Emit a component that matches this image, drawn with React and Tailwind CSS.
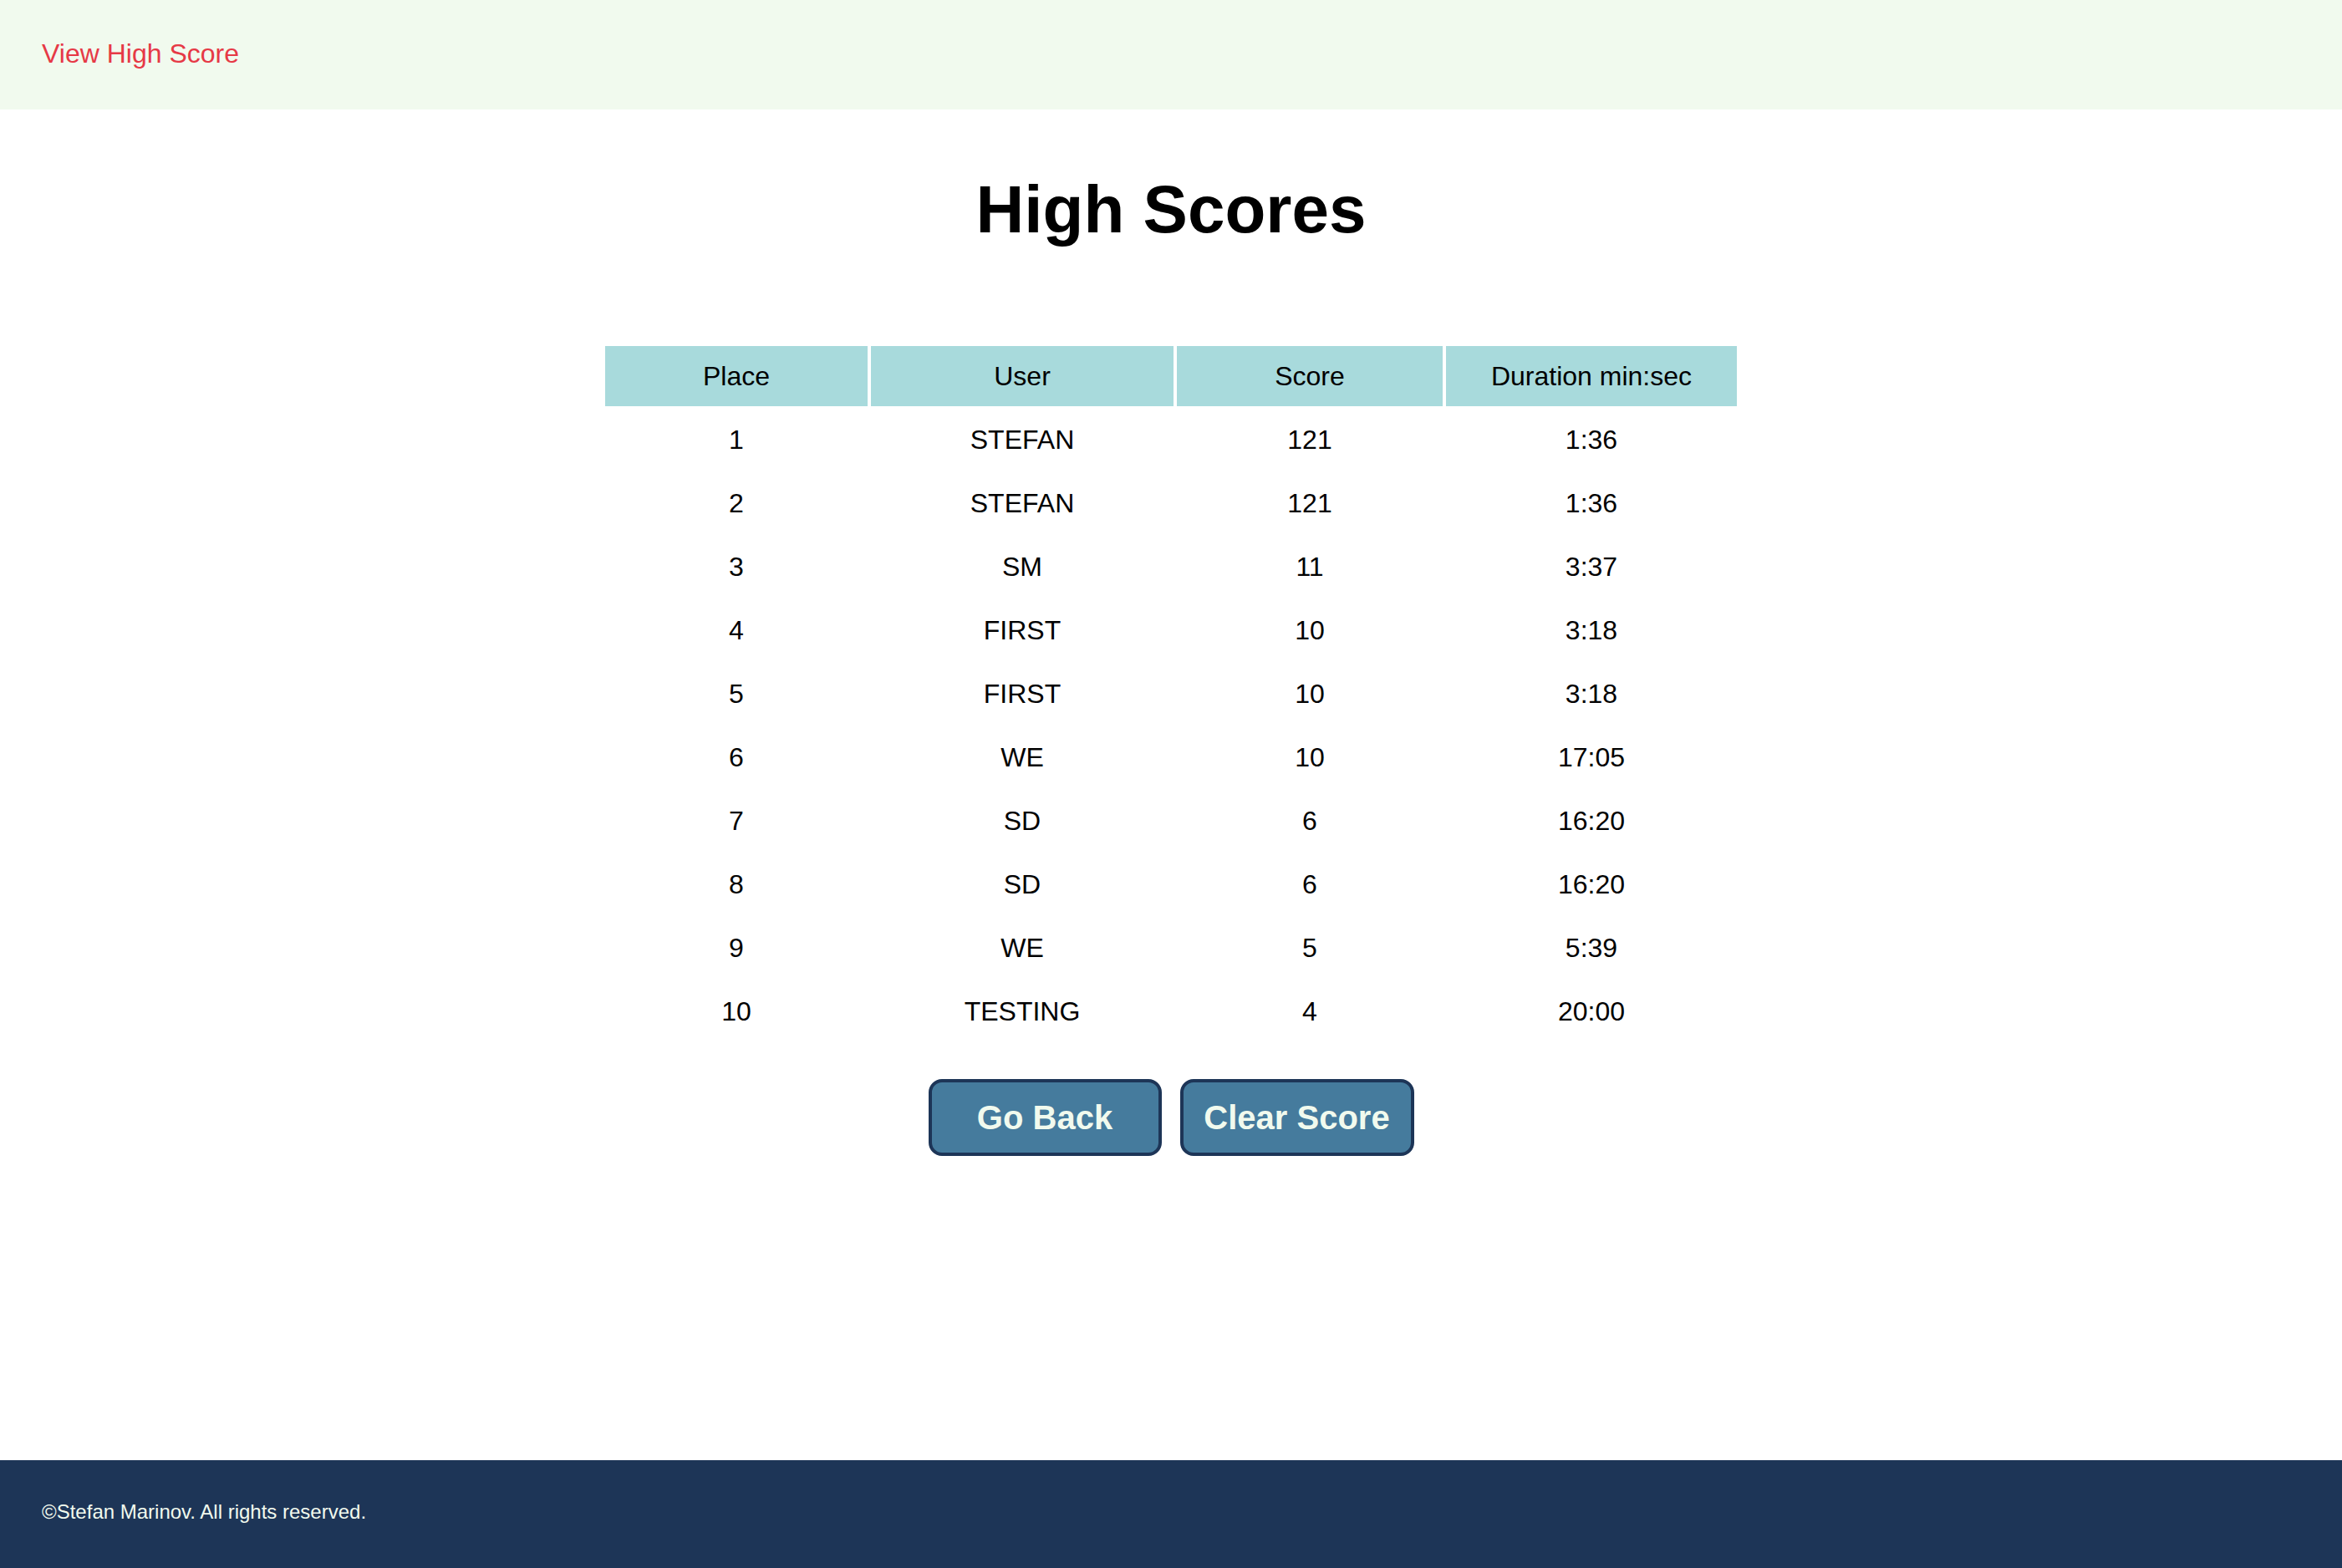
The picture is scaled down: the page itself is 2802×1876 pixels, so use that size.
const scores = [
  { place: 1, user: "STEFAN", score: 121, duration: "1:36" },
  { place: 2, user: "STEFAN", score: 121, duration: "1:36" },
  { place: 3, user: "SM", score: 11, duration: "3:37" },
  { place: 4, user: "FIRST", score: 10, duration: "3:18" },
  { place: 5, user: "FIRST", score: 10, duration: "3:18" },
  { place: 6, user: "WE", score: 10, duration: "17:05" },
  { place: 7, user: "SD", score: 6, duration: "16:20" },
  { place: 8, user: "SD", score: 6, duration: "16:20" },
  { place: 9, user: "WE", score: 5, duration: "5:39" },
  { place: 10, user: "TESTING", score: 4, duration: "20:00" },
];

const HighScores = () => {
  return (
    <div className="min-h-screen flex flex-col bg-white text-black font-['Liberation_Sans',Arial,sans-serif]">
      <header className="h-[131px] bg-[#f1faee] flex items-center px-[50px] pb-[4px]">
        <a href="#" className="text-[32px] text-[#e63946]">
          View High Score
        </a>
      </header>

      <main className="flex-1 flex flex-col items-center">
        <h1 className="mt-[74px] text-[80px] leading-[92px] font-bold">
          High Scores
        </h1>

        <table className="mt-[113px] border-separate border-spacing-[4px] text-[32px] text-center">
          <thead>
            <tr className="bg-[#a8dadc]">
              <th className="w-[314px] h-[72px] font-normal">Place</th>
              <th className="w-[362px] h-[72px] font-normal">User</th>
              <th className="w-[318px] h-[72px] font-normal">Score</th>
              <th className="w-[348px] h-[72px] font-normal">Duration min:sec</th>
            </tr>
          </thead>
          <tbody>
            {scores.map((row) => (
              <tr key={row.place}>
                <td className="h-[72px]">{row.place}</td>
                <td className="h-[72px]">{row.user}</td>
                <td className="h-[72px]">{row.score}</td>
                <td className="h-[72px]">{row.duration}</td>
              </tr>
            ))}
          </tbody>
        </table>

        <div className="mt-[41px] flex gap-[22px]">
          <button className="w-[279px] h-[92px] bg-[#457b9d] border-[4px] border-[#1d3557] rounded-[16px] text-[40px] font-bold text-[#f1faee]">
            Go Back
          </button>
          <button className="w-[280px] h-[92px] bg-[#457b9d] border-[4px] border-[#1d3557] rounded-[16px] text-[40px] font-bold text-[#f1faee]">
            Clear Score
          </button>
        </div>
      </main>

      <footer className="h-[129px] bg-[#1d3557] flex items-center px-[50px] pb-[6px]">
        <p className="text-[24px] text-[#f1faee]">
          ©Stefan Marinov. All rights reserved.
        </p>
      </footer>
    </div>
  );
};

export default HighScores;
